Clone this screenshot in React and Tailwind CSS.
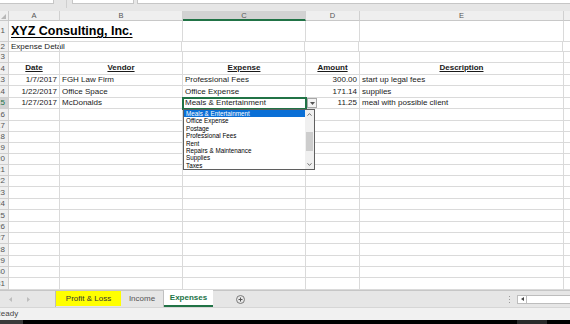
import React from "react";

const colW = ["w-[51px]", "w-[123px]", "w-[123px]", "w-[54px]", "w-[204px]"];

function RowHead({ n, active }) {
  return (
    <div
      className={`w-[9px] shrink-0 h-full flex justify-end items-center pr-[3px] overflow-hidden border-r border-b border-[#cfcfcf] text-[8px] leading-[10px] ${
        active ? "bg-[#d2d2d2] text-[#217346]" : "bg-[#efefef] text-[#555]"
      }`}
    >
      <span className="whitespace-nowrap">{n}</span>
    </div>
  );
}

function Cell({ i, children, className = "" }) {
  return (
    <div
      className={`${colW[i]} shrink-0 h-full border-r border-b border-[#dadada] px-[2px] flex items-center whitespace-nowrap ${className}`}
    >
      {children}
    </div>
  );
}

function Row({ n, h, active, children }) {
  return (
    <div className={`flex shrink-0 ${h} text-[8px] leading-[10px] text-[#1a1a1a]`}>
      <RowHead n={n} active={active} />
      {children}
      <div className="flex-1 h-full border-b border-[#dadada]" />
    </div>
  );
}

function EmptyCells() {
  return (
    <>
      {[0, 1, 2, 3, 4].map((i) => (
        <Cell key={i} i={i} />
      ))}
    </>
  );
}

const items = [
  "Meals & Entertainment",
  "Office Expense",
  "Postage",
  "Professional Fees",
  "Rent",
  "Repairs & Maintenance",
  "Supplies",
  "Taxes",
];

const lowerRows = [
  [16, "h-[12px]"],
  [17, "h-[11px]"],
  [18, "h-[11px]"],
  [19, "h-[11px]"],
  [20, "h-[11px]"],
  [21, "h-[11px]"],
  [22, "h-[11px]"],
  [23, "h-[12px]"],
  [24, "h-[11px]"],
  [25, "h-[12px]"],
  [26, "h-[11px]"],
  [27, "h-[11px]"],
  [28, "h-[12px]"],
  [29, "h-[11px]"],
  [30, "h-[11px]"],
  [31, "h-[12px]"],
];

export default function App() {
  return (
    <div className="w-[570px] h-[324px] overflow-hidden flex flex-col bg-white font-['Liberation_Sans',Arial,sans-serif]">
      {/* top strip (formula bar bottom) */}
      <div className="h-[11px] shrink-0 bg-[#e6e6e6] flex items-start">
        <div className="w-[54px] h-[4px] bg-white border-b border-r border-[#c6c6c6]" />
        <div className="w-[1px] h-[8px] ml-[12px] bg-[#cfcfcf]" />
        <div className="ml-[5px] w-[62px] h-[4px] bg-white border border-t-0 border-[#c6c6c6]" />
        <div className="ml-[3px] flex-1 h-[4px] bg-white border-b border-l border-[#c6c6c6]" />
      </div>

      {/* column headers */}
      <div className="h-[10px] shrink-0 flex bg-[#efefef] text-[7.5px] leading-[9px] text-[#555]">
        <div className="w-[9px] shrink-0 border-r border-b border-[#c8c8c8] flex items-end justify-start pl-[1px] pb-[1px]">
          <svg width="5" height="5" viewBox="0 0 5 5">
            <polygon points="5,0 5,5 0,5" fill="#b8b8b8" />
          </svg>
        </div>
        {["A", "B", "C", "D", "E"].map((l, i) => (
          <div
            key={l}
            className={`${colW[i]} shrink-0 border-r border-[#d0d0d0] flex justify-center ${
              i === 2 ? "bg-[#d2d2d2] border-b-2 border-b-[#217346]" : "border-b border-b-[#c8c8c8]"
            }`}
          >
            {l}
          </div>
        ))}
        <div className="flex-1 border-b border-[#c8c8c8]" />
      </div>

      {/* grid */}
      <div className="flex flex-col shrink-0">
        <Row n={1} h="h-[21px]">
          <Cell i={0} className="border-r-0 overflow-visible relative z-10 items-end pb-[3px]">
            <span className="text-[12.5px] leading-[14px] font-bold underline underline-offset-[2px] text-black">
              XYZ Consulting, Inc.
            </span>
          </Cell>
          <Cell i={1} />
          <Cell i={2} />
          <Cell i={3} />
          <Cell i={4} />
        </Row>
        <Row n={2} h="h-[10px]">
          <Cell i={0} className="overflow-visible border-r-0">Expense Detail</Cell>
          <Cell i={1} className="border-l border-l-[#dadada] -ml-[1px]" />
          <Cell i={2} />
          <Cell i={3} />
          <Cell i={4} />
        </Row>
        <Row n={3} h="h-[11px]">
          <EmptyCells />
        </Row>
        <Row n={4} h="h-[12px]">
          {["Date", "Vendor", "Expense", "Amount", "Description"].map((t, i) => (
            <Cell key={t} i={i} className="justify-center items-end pb-[1px]">
              <span className="font-bold underline underline-offset-[1px]">{t}</span>
            </Cell>
          ))}
        </Row>
        <Row n={13} h="h-[11px]">
          <Cell i={0} className="justify-end">1/7/2017</Cell>
          <Cell i={1}>FGH Law Firm</Cell>
          <Cell i={2}>Professional Fees</Cell>
          <Cell i={3} className="justify-end">300.00</Cell>
          <Cell i={4}>start up legal fees</Cell>
        </Row>
        <Row n={14} h="h-[12px]">
          <Cell i={0} className="justify-end">1/22/2017</Cell>
          <Cell i={1}>Office Space</Cell>
          <Cell i={2}>Office Expense</Cell>
          <Cell i={3} className="justify-end">171.14</Cell>
          <Cell i={4}>supplies</Cell>
        </Row>
        <Row n={15} h="h-[11px]" active>
          <Cell i={0} className="justify-end">1/27/2017</Cell>
          <Cell i={1}>McDonalds</Cell>
          <Cell i={2} className="relative z-20">
            Meals &amp; Entertainment
            {/* active cell border */}
            <div className="absolute -left-[1px] -top-[1px] w-[125px] h-[13px] border-2 border-[#217346] pointer-events-none" />
            {/* dropdown arrow button */}
            <div className="absolute left-[124px] top-0 w-[10px] h-[10px] bg-[#f4f4f4] border border-[#a8a8a8] flex items-center justify-center">
              <svg width="5" height="3" viewBox="0 0 5 3">
                <polygon points="0,0 5,0 2.5,3" fill="#555" />
              </svg>
            </div>
            {/* dropdown list */}
            <div className="absolute -left-[0px] top-[11px] w-[132px] h-[61px] bg-white border border-[#5f5f5f] flex text-[6.3px] leading-[7.4px] text-black">
              <div className="flex-1 flex flex-col">
                {items.map((t, k) => (
                  <div
                    key={t}
                    className={`h-[7.4px] pl-[2px] whitespace-nowrap ${
                      k === 0 ? "bg-[#0a6fd6] text-white" : ""
                    }`}
                  >
                    {t}
                  </div>
                ))}
              </div>
              <div className="w-[9px] bg-[#f0f0f0] flex flex-col items-center">
                <div className="h-[9px] flex items-center justify-center">
                  <svg width="5" height="3" viewBox="0 0 5 3">
                    <polyline points="0.5,2.7 2.5,0.6 4.5,2.7" fill="none" stroke="#606060" strokeWidth="0.9" />
                  </svg>
                </div>
                <div className="h-[13px]" />
                <div className="h-[19px] w-[7px] bg-[#cdcdcd]" />
                <div className="flex-1" />
                <div className="h-[9px] flex items-center justify-center">
                  <svg width="5" height="3" viewBox="0 0 5 3">
                    <polyline points="0.5,0.3 2.5,2.4 4.5,0.3" fill="none" stroke="#606060" strokeWidth="0.9" />
                  </svg>
                </div>
              </div>
            </div>
          </Cell>
          <Cell i={3} className="justify-end">11.25</Cell>
          <Cell i={4}>meal with possible client</Cell>
        </Row>
        {lowerRows.map(([n, h]) => (
          <Row key={n} n={n} h={h}>
            <EmptyCells />
          </Row>
        ))}
      </div>

      {/* sheet tabs */}
      <div className="h-[17px] shrink-0 bg-[#e6e6e6] border-t border-[#c6c6c6] flex items-stretch text-[8px] leading-[10px]">
        <div className="w-[56px] shrink-0 flex items-center border-r border-[#bdbdbd]">
          <svg className="ml-[9px]" width="3" height="5" viewBox="0 0 3 5">
            <polygon points="3,0 3,5 0,2.5" fill="#bdbdbd" />
          </svg>
          <svg className="ml-[15px]" width="3" height="5" viewBox="0 0 3 5">
            <polygon points="0,0 0,5 3,2.5" fill="#bdbdbd" />
          </svg>
        </div>
        <div className="w-[65px] shrink-0 bg-[#ffff00] flex items-center justify-center text-[#333] mb-[1px]">
          Profit &amp; Loss
        </div>
        <div className="w-[43px] shrink-0 flex items-center justify-center text-[#555] border-r border-[#c0c0c0]">
          Income
        </div>
        <div className="w-[49px] shrink-0 -mt-[1px] bg-white flex items-center justify-center font-bold text-[#217346] border-b-2 border-[#217346]">
          Expenses
        </div>
        <div className="w-[54px] shrink-0 flex items-center justify-center">
          <div className="w-[9px] h-[9px] rounded-full border border-[#7a7a7a] flex items-center justify-center">
            <svg width="5" height="5" viewBox="0 0 5 5">
              <path d="M2.5 0.5V4.5M0.5 2.5H4.5" stroke="#555" strokeWidth="1" />
            </svg>
          </div>
        </div>
        <div className="flex-1" />
        <div className="w-[10px] flex flex-col items-center justify-center gap-[2px]">
          <div className="w-[1px] h-[1px] bg-[#9a9a9a]" />
          <div className="w-[1px] h-[1px] bg-[#9a9a9a]" />
          <div className="w-[1px] h-[1px] bg-[#9a9a9a]" />
        </div>
        <div className="w-[53px] ml-[3px] flex items-center">
          <div className="w-[10px] h-[9px] bg-white border border-[#bdbdbd] flex items-center justify-center">
            <svg width="3" height="4" viewBox="0 0 3 4">
              <polygon points="3,0 3,4 0,2" fill="#444" />
            </svg>
          </div>
          <div className="flex-1 h-[9px] bg-white border-y border-[#bdbdbd]" />
        </div>
      </div>

      {/* status bar */}
      <div className="h-[13px] shrink-0 bg-[#f1f1f1] border-t border-[#d6d6d6] flex items-center text-[8px] leading-[10px] text-[#444]">
        <span className="-ml-[5px]">Ready</span>
      </div>

      {/* bottom strip */}
      <div className="h-[4px] shrink-0 bg-black flex">
        <div className="w-[23px] bg-[#3a3a3a]" />
        <div className="ml-[494px] w-[30px] bg-[#2a2a2a]" />
      </div>
    </div>
  );
}
